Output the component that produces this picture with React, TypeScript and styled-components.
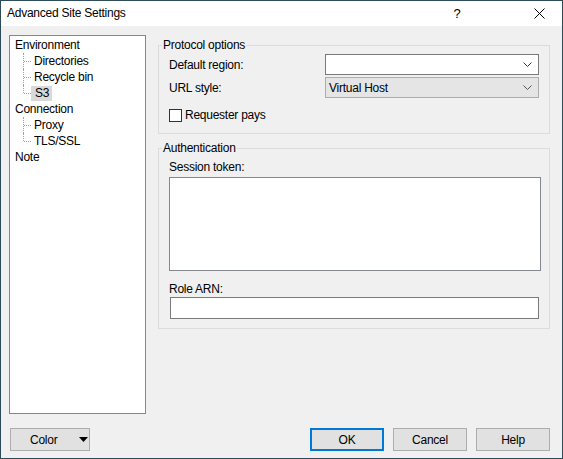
import React from "react";
import styled, { createGlobalStyle } from "styled-components";

const GlobalStyle = createGlobalStyle`
  html, body {
    margin: 0;
    padding: 0;
    background: #ffffff;
  }
  * {
    box-sizing: border-box;
  }
`;

const Window = styled.div`
  width: 563px;
  height: 459px;
  border: 1px solid #2b4a5a;
  background: #f0f0f0;
  display: flex;
  flex-direction: column;
  font-family: "Liberation Sans", Arial, sans-serif;
  font-size: 12px;
  letter-spacing: -0.25px;
  color: #000;
`;

const TitleBar = styled.div`
  height: 25px;
  background: #ffffff;
  display: flex;
  align-items: center;
  padding-left: 6px;
`;

const Title = styled.div`
  flex: 1;
  padding-bottom: 2px;
`;

const TitleButton = styled.div<{ $gap?: number }>`
  width: 46px;
  height: 25px;
  display: flex;
  align-items: center;
  justify-content: center;
  font-size: 13px;
  padding-bottom: 1px;
  margin-right: ${(p) => p.$gap ?? 0}px;
`;

const Body = styled.div`
  flex: 1;
  display: flex;
  flex-direction: column;
  padding: 9px 12px 7px 8px;
`;

const MainRow = styled.div`
  display: flex;
  gap: 12px;
  height: 379px;
`;

const Tree = styled.div`
  width: 137px;
  height: 100%;
  background: #ffffff;
  border: 1px solid #828790;
  padding-top: 1px;
`;

const TreeRow = styled.div<{ $child?: boolean; $last?: boolean }>`
  position: relative;
  height: 16px;
  line-height: 16px;
  padding-left: ${(p) => (p.$child ? "21px" : "2px")};

  ${(p) =>
    p.$child &&
    `
    &::before {
      content: "";
      position: absolute;
      left: 13px;
      top: 0;
      height: ${p.$last ? "8px" : "16px"};
      border-left: 1px dotted #a0a0a0;
    }
    &::after {
      content: "";
      position: absolute;
      left: 14px;
      top: 8px;
      width: 7px;
      border-top: 1px dotted #a0a0a0;
    }
  `}
`;

const TreeLabel = styled.span<{ $selected?: boolean }>`
  display: inline-block;
  padding: 0 3px 0 ${(p) => (p.$selected ? "4px" : "3px")};
  line-height: 15px;
  background: ${(p) => (p.$selected ? "#d9d9d9" : "transparent")};
`;

const RightPanel = styled.div`
  width: 392px;
  padding-top: 3px;
  display: flex;
  flex-direction: column;
  gap: 7px;
`;

const Group = styled.fieldset<{ $pad?: string }>`
  margin: 0;
  min-width: 0;
  border: 1px solid #dcdcdc;
  padding: ${(p) => p.$pad || "2px 10px 11px 10px"};
`;

const Legend = styled.legend`
  margin-left: -7px;
  padding: 0 1px;
  line-height: 14px;
`;

const FormGrid = styled.div`
  display: grid;
  grid-template-columns: 156px 214px;
  row-gap: 2px;
  align-items: center;
`;

const Combo = styled.div<{ $disabled?: boolean }>`
  height: 21px;
  border: 1px solid ${(p) => (p.$disabled ? "#adadad" : "#7a7a7a")};
  background: ${(p) => (p.$disabled ? "#e5e5e5" : "#ffffff")};
  display: flex;
  align-items: center;
  padding: 0 6px 0 3px;
`;

const ComboText = styled.span`
  flex: 1;
`;

const CheckRow = styled.label`
  display: flex;
  align-items: center;
  gap: 3px;
  margin-top: 10px;
  height: 14px;
`;

const CheckBox = styled.span`
  width: 13px;
  height: 13px;
  border: 1px solid #333333;
  background: #ffffff;
`;

const FieldLabel = styled.div<{ $top?: number }>`
  line-height: 14px;
  margin-top: ${(p) => p.$top ?? 0}px;
`;

const TextArea = styled.div`
  width: 372px;
  height: 94px;
  margin-top: 3px;
  border: 1px solid #828790;
  background: #ffffff;
`;

const TextInput = styled.div`
  width: 369px;
  height: 22px;
  margin: 1px 0 0 1px;
  border: 1px solid #7a7a7a;
  background: #ffffff;
`;

const Footer = styled.div`
  display: flex;
  margin-top: 14px;
  gap: 9px;
`;

const Button = styled.div<{ $primary?: boolean }>`
  width: 74px;
  height: 23px;
  display: flex;
  align-items: center;
  justify-content: center;
  background: #e1e1e1;
  border: ${(p) => (p.$primary ? "2px solid #0078d7" : "1px solid #adadad")};
`;

const SplitButton = styled(Button)`
  width: 80px;
  justify-content: flex-start;
  padding-left: 19px;
  gap: 22px;
  margin-left: 1px;
  margin-right: auto;
`;

const Chevron = ({ color = "#333" }: { color?: string }) => (
  <svg width="9" height="5" viewBox="0 0 9 5">
    <polyline points="0.5,0.5 4.5,4.5 8.5,0.5" fill="none" stroke={color} strokeWidth="1" />
  </svg>
);

const CloseIcon = () => (
  <svg width="11" height="11" viewBox="0 0 11 11">
    <path d="M0.5 0.5 L10.5 10.5 M10.5 0.5 L0.5 10.5" stroke="#000" strokeWidth="1" />
  </svg>
);

const DownTriangle = () => (
  <svg width="9" height="5" viewBox="0 0 9 5">
    <polygon points="0,0 9,0 4.5,5" fill="#000" />
  </svg>
);

const treeItems = [
  { label: "Environment" },
  { label: "Directories", child: true },
  { label: "Recycle bin", child: true },
  { label: "S3", child: true, last: true, selected: true },
  { label: "Connection" },
  { label: "Proxy", child: true },
  { label: "TLS/SSL", child: true, last: true },
  { label: "Note" },
];

export default function App() {
  return (
    <>
      <GlobalStyle />
      <Window>
        <TitleBar>
          <Title>Advanced Site Settings</Title>
          <TitleButton $gap={36}>?</TitleButton>
          <TitleButton>
            <CloseIcon />
          </TitleButton>
        </TitleBar>
        <Body>
          <MainRow>
            <Tree>
              {treeItems.map((item) => (
                <TreeRow key={item.label} $child={item.child} $last={item.last}>
                  <TreeLabel $selected={item.selected}>{item.label}</TreeLabel>
                </TreeRow>
              ))}
            </Tree>
            <RightPanel>
              <Group>
                <Legend>Protocol options</Legend>
                <FormGrid>
                  <span>Default region:</span>
                  <Combo>
                    <ComboText />
                    <Chevron />
                  </Combo>
                  <span>URL style:</span>
                  <Combo $disabled>
                    <ComboText>Virtual Host</ComboText>
                    <Chevron color="#555" />
                  </Combo>
                </FormGrid>
                <CheckRow>
                  <CheckBox />
                  Requester pays
                </CheckRow>
              </Group>
              <Group $pad="5px 8px 9px 10px">
                <Legend>Authentication</Legend>
                <FieldLabel>Session token:</FieldLabel>
                <TextArea />
                <FieldLabel $top={11}>Role ARN:</FieldLabel>
                <TextInput />
              </Group>
            </RightPanel>
          </MainRow>
          <Footer>
            <SplitButton>
              Color
              <DownTriangle />
            </SplitButton>
            <Button $primary>OK</Button>
            <Button>Cancel</Button>
            <Button>Help</Button>
          </Footer>
        </Body>
      </Window>
    </>
  );
}
